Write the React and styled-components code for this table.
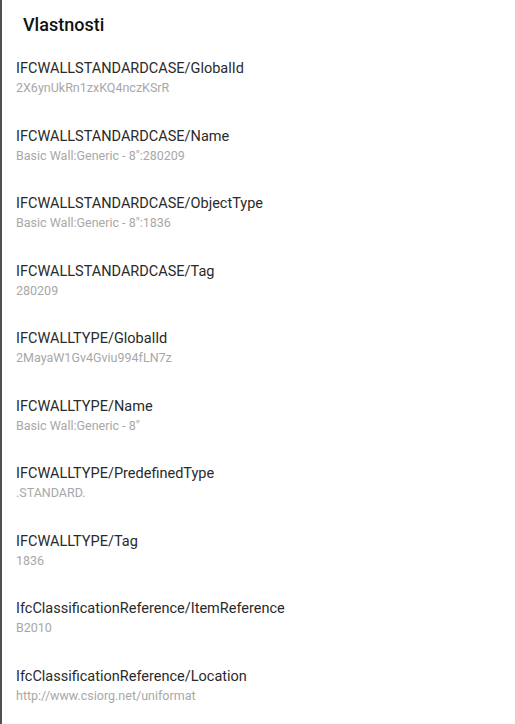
import React from "react";
import styled, { createGlobalStyle } from "styled-components";

const Global = createGlobalStyle`
  html, body { margin: 0; padding: 0; background: #fff; }
  body { font-family: Roboto, "Noto Sans", sans-serif; }
`;

const Panel = styled.div`
  box-sizing: border-box;
  height: 724px;
  border-left: 2px solid #505050;
  background: #fff;
  padding: 13px 0 0 14px;
  display: flex;
  flex-direction: column;
`;

const Title = styled.h2`
  margin: 0 0 22px 7px;
  font-size: 18px;
  line-height: 24px;
  font-weight: 500;
  color: #111;
`;

const List = styled.div`
  display: flex;
  flex-direction: column;
  gap: 30.5px;
`;

const Row = styled.div`
  display: flex;
  flex-direction: column;
  gap: 1px;
`;

const Label = styled.div`
  font-size: 14.5px;
  line-height: 20px;
  color: #2a2a2a;
`;

const Value = styled.div`
  font-size: 12.5px;
  line-height: 16px;
  color: #a8a8a8;
`;

const props = [
  ["IFCWALLSTANDARDCASE/GlobalId", "2X6ynUkRn1zxKQ4nczKSrR"],
  ["IFCWALLSTANDARDCASE/Name", "Basic Wall:Generic - 8\":280209"],
  ["IFCWALLSTANDARDCASE/ObjectType", "Basic Wall:Generic - 8\":1836"],
  ["IFCWALLSTANDARDCASE/Tag", "280209"],
  ["IFCWALLTYPE/GlobalId", "2MayaW1Gv4Gviu994fLN7z"],
  ["IFCWALLTYPE/Name", "Basic Wall:Generic - 8\""],
  ["IFCWALLTYPE/PredefinedType", ".STANDARD."],
  ["IFCWALLTYPE/Tag", "1836"],
  ["IfcClassificationReference/ItemReference", "B2010"],
  ["IfcClassificationReference/Location", "http://www.csiorg.net/uniformat"],
];

export default function App() {
  return (
    <>
      <Global />
      <Panel>
        <Title>Vlastnosti</Title>
        <List>
          {props.map(([k, v]) => (
            <Row key={k}>
              <Label>{k}</Label>
              <Value>{v}</Value>
            </Row>
          ))}
        </List>
      </Panel>
    </>
  );
}
